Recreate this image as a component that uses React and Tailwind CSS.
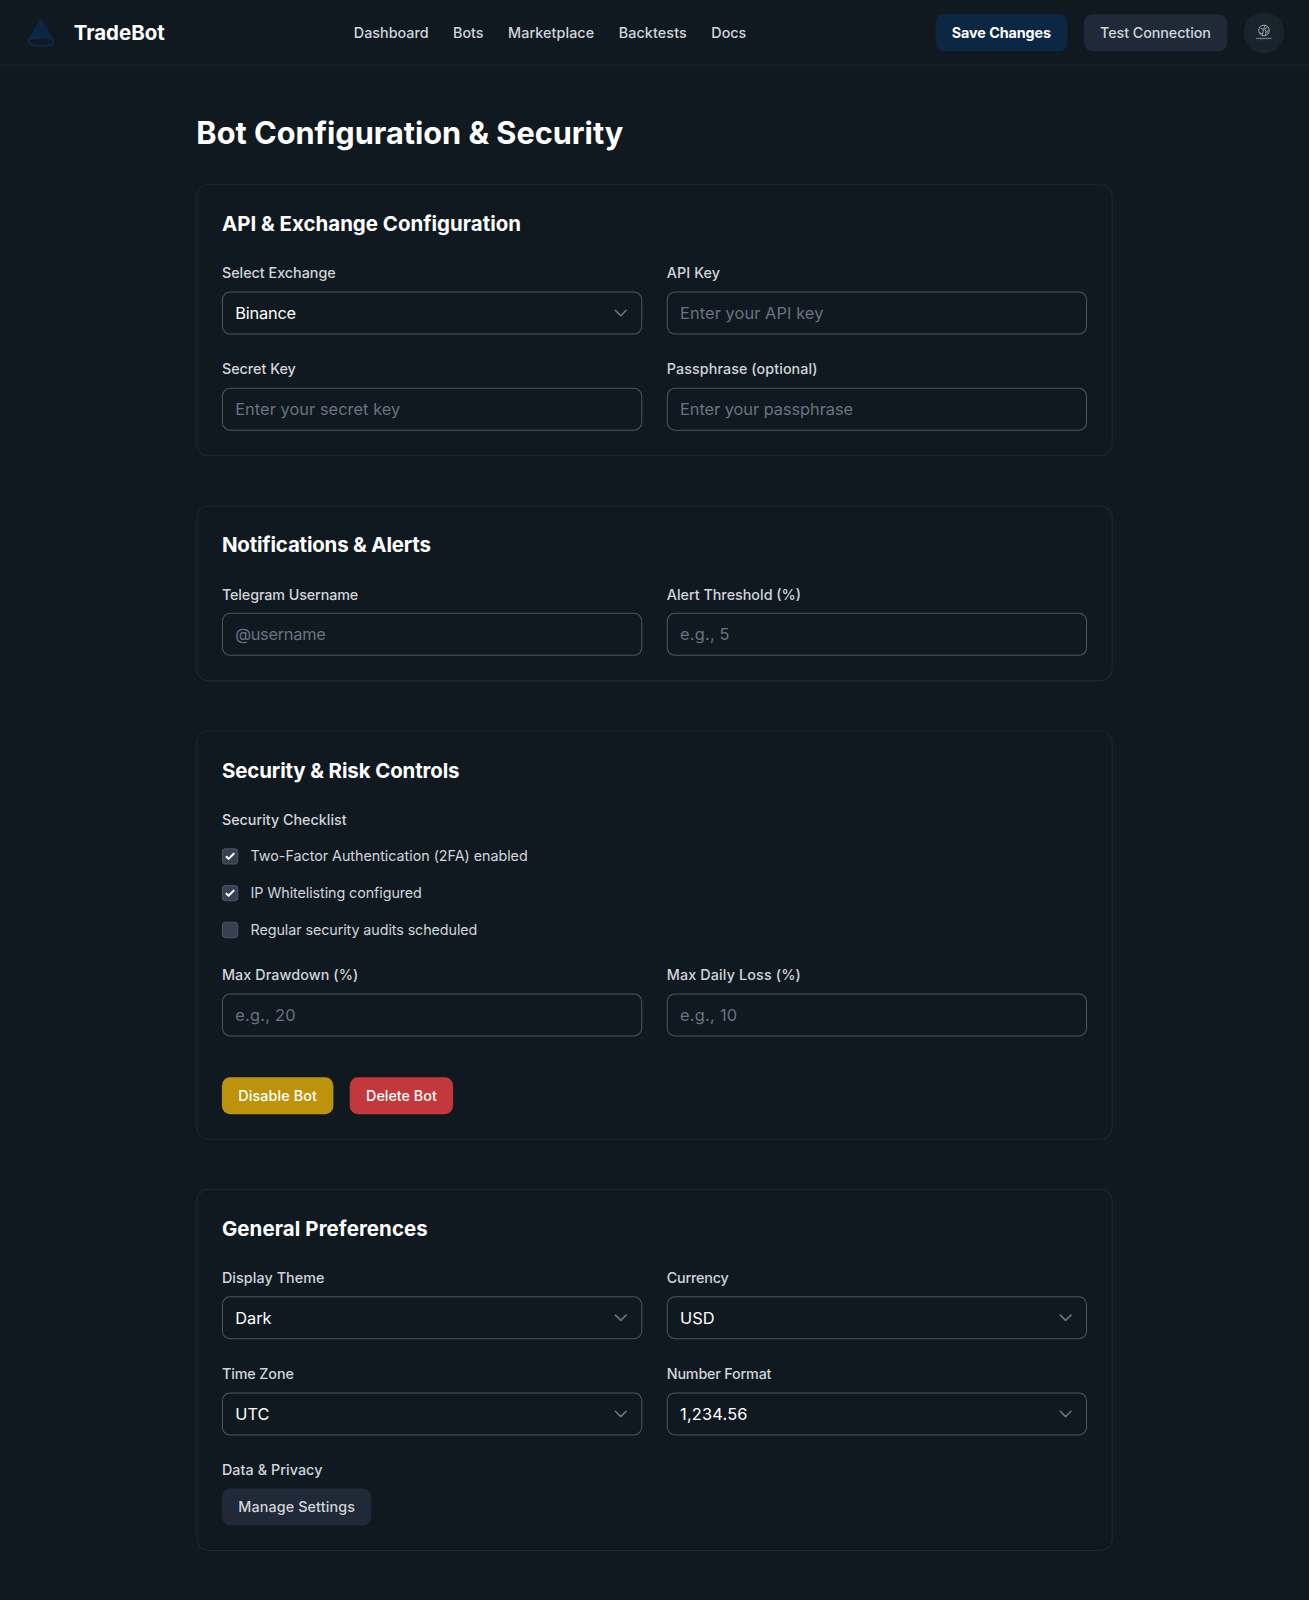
import React from "react";

const NAV = [
  { name: "Dashboard", tracking: "" },
  { name: "Bots", tracking: "" },
  { name: "Marketplace", tracking: "tracking-[0.08px]" },
  { name: "Backtests", tracking: "tracking-[0.1px]" },
  { name: "Docs", tracking: "" },
];

function Logo() {
  return (
    <svg viewBox="0 0 32 32" className="size-8 text-[#0b2743]" fill="currentColor">
      <path
        fillRule="evenodd"
        clipRule="evenodd"
        d="M16 3.4 C16.8 3.4 17.3 3.9 17.8 4.8 L27.9 21.8 C28.9 22.8 29.4 23.6 29.4 24.6 C29.4 28.2 23 30.2 16 30.2 C9 30.2 2.6 28.2 2.6 24.6 C2.6 23.6 3.1 22.8 4.1 21.8 L14.2 4.8 C14.7 3.9 15.2 3.4 16 3.4 Z M16 21.8 C10.4 21.8 5.4 23 5.4 24.9 C5.4 26.8 10.4 28 16 28 C21.6 28 26.6 26.8 26.6 24.9 C26.6 23 21.6 21.8 16 21.8 Z"
      />
    </svg>
  );
}

function Avatar() {
  return (
    <div className="flex size-10 items-center justify-center rounded-full bg-[#18242b]">
      <svg viewBox="0 0 40 40" className="size-10" fill="none" stroke="#a3abac">
        <circle cx="20" cy="17.8" r="5.2" strokeWidth="0.9" />
        <path d="M16.5 15.6l3 1.4 1.2-3.8M19.5 17l-1 4.8M18.5 21.2l-3-1.4M21.5 22.4l.6-3.4 2.6-1.4M22.1 18.8l-1.5-2.4 3-1.8M22.1 18.8l2 2" strokeWidth="0.9" />
        <path d="M12.3 25.5h15.4" strokeWidth="1.1" strokeDasharray="1.6 .3" opacity=".7" />
        <path d="M14.5 26.9h11" strokeWidth="0.6" strokeDasharray="1 .5" opacity=".4" />
      </svg>
    </div>
  );
}

function Card({ title, tracking = "", children }) {
  return (
    <section className="rounded-xl border border-[#1c2936] p-6">
      <h2 className={`mb-6 text-xl font-bold text-white ${tracking}`}>{title}</h2>
      {children}
    </section>
  );
}

function Label({ tracking = "", children }) {
  return <div className={`text-sm font-medium text-[#d1d5db] ${tracking}`}>{children}</div>;
}

function Input({ label, labelTracking, placeholder, tracking = "" }) {
  return (
    <div>
      <Label tracking={labelTracking}>{label}</Label>
      <input
        placeholder={placeholder}
        className={`mt-2 block h-[42px] w-full rounded-lg border border-[#4b5563] bg-transparent px-3 text-base text-white placeholder:text-[#6b7280] ${tracking}`}
      />
    </div>
  );
}

function Select({ label, labelTracking, value, tracking = "" }) {
  return (
    <div>
      <Label tracking={labelTracking}>{label}</Label>
      <div className="mt-2 flex h-[42px] items-center justify-between rounded-lg border border-[#4b5563] pr-2.5 pl-3 text-base text-white">
        <span className={tracking}>{value}</span>
        <svg viewBox="0 0 20 20" className="size-5" fill="none" stroke="#6b7280" strokeWidth="1.6" strokeLinecap="round" strokeLinejoin="round">
          <path d="M4.8 7.4 10 12.6l5.2-5.2" />
        </svg>
      </div>
    </div>
  );
}

function Check({ checked, tracking = "", children }) {
  return (
    <div className="flex items-center gap-3">
      <span className="size-4 rounded border border-[#4b5563] bg-[#384153]">
        {checked && (
          <svg viewBox="1 1 14 14" className="block size-full" fill="#fff">
            <path d="M12.207 4.793a1 1 0 010 1.414l-5 5a1 1 0 01-1.414 0l-2-2a1 1 0 011.414-1.414L6.5 9.086l4.293-4.293a1 1 0 011.414 0z" />
          </svg>
        )}
      </span>
      <span className={`text-sm text-[#d1d5db] ${tracking}`}>{children}</span>
    </div>
  );
}

function Button({ className, children }) {
  return <button className={`h-9 rounded-lg px-4 text-sm ${className}`}>{children}</button>;
}

export default function App() {
  return (
    <div className="h-[1600px] overflow-hidden bg-[#111920]">
      <div className="w-[1280px] origin-top-left font-['Inter',sans-serif] [transform:scale(1.02266,1.0231)]">
        <header className="flex h-16 items-center justify-between border-b border-[#212733] px-6">
          <div className="flex items-center gap-4">
            <Logo />
            <span className="text-xl font-bold text-white">TradeBot</span>
          </div>
          <nav className="flex gap-6">
            {NAV.map(({ name, tracking }) => (
              <a key={name} className={`text-sm font-medium text-[#d1d5db] ${tracking}`}>{name}</a>
            ))}
          </nav>
          <div className="flex items-center gap-4">
            <Button className="bg-[#0b2743] font-bold tracking-[-0.07px] text-white">Save Changes</Button>
            <Button className="bg-[#1f2937] font-medium tracking-[-0.07px] text-[#d1d5db]">Test Connection</Button>
            <Avatar />
          </div>
        </header>

        <main className="mx-auto w-4xl py-12">
          <h1 className="mb-8 text-3xl font-bold text-white">Bot Configuration &amp; Security</h1>
          <div className="flex flex-col gap-12">
            <Card title="API & Exchange Configuration">
              <div className="grid grid-cols-2 gap-6">
                <Select label="Select Exchange" value="Binance" tracking="tracking-[-0.2px]" />
                <Input label="API Key" labelTracking="tracking-[0.08px]" placeholder="Enter your API key" tracking="tracking-[0.08px]" />
                <Input label="Secret Key" placeholder="Enter your secret key" tracking="tracking-[0.05px]" />
                <Input label="Passphrase (optional)" labelTracking="tracking-[0.08px]" placeholder="Enter your passphrase" tracking="tracking-[-0.05px]" />
              </div>
            </Card>

            <Card title="Notifications & Alerts" tracking="tracking-[-0.18px]">
              <div className="grid grid-cols-2 gap-6">
                <Input label="Telegram Username" labelTracking="tracking-[-0.1px]" placeholder="@username" tracking="tracking-[-0.28px]" />
                <Input label="Alert Threshold (%)" placeholder="e.g., 5" tracking="tracking-[0.2px]" />
              </div>
            </Card>

            <Card title="Security & Risk Controls" tracking="tracking-[-0.12px]">
              <div className="flex flex-col gap-4">
                <Label>Security Checklist</Label>
                <Check checked tracking="tracking-[-0.03px]">Two-Factor Authentication (2FA) enabled</Check>
                <Check checked tracking="tracking-[-0.08px]">IP Whitelisting configured</Check>
                <Check tracking="tracking-[-0.08px]">Regular security audits scheduled</Check>
              </div>
              <div className="mt-6 grid grid-cols-2 gap-6">
                <Input label="Max Drawdown (%)" labelTracking="tracking-[0.1px]" placeholder="e.g., 20" tracking="tracking-[0.25px]" />
                <Input label="Max Daily Loss (%)" labelTracking="tracking-[0.14px]" placeholder="e.g., 10" tracking="tracking-[0.25px]" />
              </div>
              <div className="mt-10 flex gap-4">
                <Button className="bg-[#bd930c] font-medium tracking-[0.12px] text-white">Disable Bot</Button>
                <Button className="bg-[#c3393b] font-medium text-white">Delete Bot</Button>
              </div>
            </Card>

            <Card title="General Preferences" tracking="tracking-[0.08px]">
              <div className="grid grid-cols-2 gap-6">
                <Select label="Display Theme" labelTracking="tracking-[0.08px]" value="Dark" />
                <Select label="Currency" labelTracking="tracking-[-0.2px]" value="USD" />
                <Select label="Time Zone" labelTracking="tracking-[-0.1px]" value="UTC" />
                <Select label="Number Format" labelTracking="tracking-[-0.17px]" value="1,234.56" tracking="tracking-[0.18px]" />
                <div>
                  <Label tracking="tracking-[0.07px]">Data &amp; Privacy</Label>
                  <Button className="mt-2 block bg-[#1f2937] font-medium tracking-[0.12px] text-[#d1d5db]">Manage Settings</Button>
                </div>
              </div>
            </Card>
          </div>
        </main>
      </div>
    </div>
  );
}
